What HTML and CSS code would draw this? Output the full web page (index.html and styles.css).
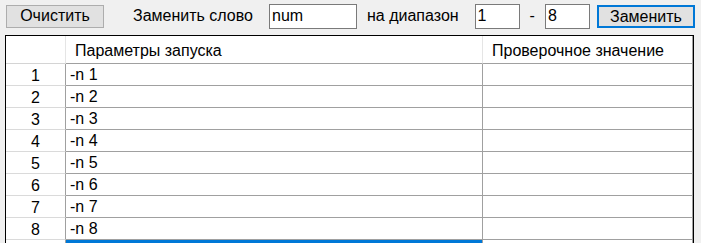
FILE: index.html
```html
<!DOCTYPE html>
<html lang="ru">
<head>
    <meta charset="UTF-8">
    <title>Параметры запуска</title>
    <link rel="stylesheet" href="styles.css">
</head>
<body>
    <div class="toolbar">
        <button class="btn btn-clear">Очистить</button>
        <span class="label label-word">Заменить слово</span>
        <input class="field field-word" type="text" value="num">
        <span class="label label-range">на диапазон</span>
        <input class="field field-num" type="text" value="1">
        <span class="label label-dash">-</span>
        <input class="field field-num field-to" type="text" value="8">
        <button class="btn btn-replace">Заменить</button>
    </div>

    <div class="grid">
        <div class="cell head rowhead"></div>
        <div class="cell head">Параметры запуска</div>
        <div class="cell head last">Проверочное значение</div>

        <div class="cell rowhead">1</div><div class="cell">-n 1</div><div class="cell last"></div>
        <div class="cell rowhead">2</div><div class="cell">-n 2</div><div class="cell last"></div>
        <div class="cell rowhead">3</div><div class="cell">-n 3</div><div class="cell last"></div>
        <div class="cell rowhead">4</div><div class="cell">-n 4</div><div class="cell last"></div>
        <div class="cell rowhead">5</div><div class="cell">-n 5</div><div class="cell last"></div>
        <div class="cell rowhead">6</div><div class="cell">-n 6</div><div class="cell last"></div>
        <div class="cell rowhead">7</div><div class="cell">-n 7</div><div class="cell last"></div>
        <div class="cell rowhead">8</div><div class="cell">-n 8</div><div class="cell last"></div>

        <div class="cell rowhead newrow"></div>
        <div class="cell selected"></div>
        <div class="cell last"></div>
    </div>
</body>
</html>
```

FILE: styles.css
```css
* {
    margin: 0;
    padding: 0;
    box-sizing: border-box;
}

body {
    background: #f0f0f0;
    font-family: 'Liberation Sans', Arial, sans-serif;
    font-size: 16px;
    color: #000;
    width: 701px;
    height: 243px;
    overflow: hidden;
}

/* Верхняя панель */
.toolbar {
    display: flex;
    align-items: center;
    height: 32px;
    padding: 0 0 0 6px;
}

.btn {
    font: inherit;
    height: 23px;
    background: #e1e1e1;
    border: 1px solid #adadad;
    color: #000;
    line-height: 20px;
}

.btn-clear {
    width: 98px;
}

.btn-replace {
    width: 98px;
    border: 2px solid #0078d7;
    margin-left: 7px;
}

.label {
    white-space: nowrap;
}

.label-word {
    margin-left: 29px;
}

.label-range {
    margin-left: 10px;
}

.label-dash {
    margin-left: 10px;
}

.field {
    font: inherit;
    height: 25px;
    background: #fff;
    border: 1px solid #7a7a7a;
    padding: 0 2px;
    margin-left: 16px;
    outline: none;
}

.field-word {
    width: 88px;
}

.field-num {
    width: 45px;
}

.field-to {
    margin-left: 10px;
}

/* Таблица */
.grid {
    display: grid;
    grid-template-columns: 60px 417px 210px;
    grid-template-rows: 28px repeat(8, 22px) 22px;
    margin: 3px 0 0 5px;
    width: 689px;
    height: 208px;
    overflow: hidden;
    background: #fff;
    border: 1px solid #000;
    border-bottom: none;
}

.cell {
    border-right: 1px solid #a0a0a0;
    border-bottom: 1px solid #a0a0a0;
    padding: 2px 0 0 4px;
    white-space: nowrap;
    line-height: 18px;
}

.head {
    padding: 6px 0 0 9px;
    border-right-color: #e5e5e5;
}

.head.last {
    border-right-color: #a0a0a0;
}

.rowhead {
    text-align: center;
    padding: 3px 0 0 0;
    border-bottom-color: #dadada;
    border-right-color: #a0a0a0;
}

.head.rowhead {
    border-right-color: #e5e5e5;
    border-bottom-color: #d4d4d4;
}

.newrow {
    border-bottom: none;
}

.selected {
    background: #0078d7;
}
```
